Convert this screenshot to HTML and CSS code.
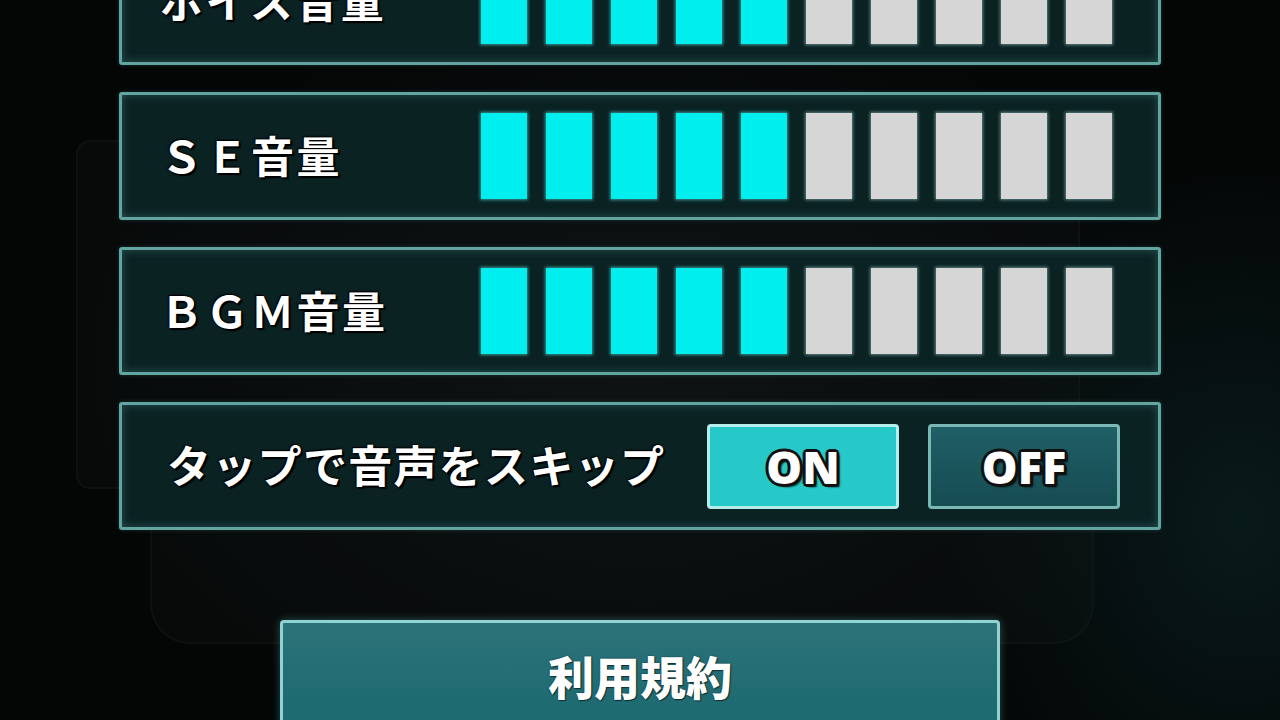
FILE: index.html
```html
<!DOCTYPE html>
<html lang="ja">
<head>
<meta charset="utf-8">
<title>設定</title>
<link rel="stylesheet" href="styles.css">
</head>
<body>
<div class="screen">
  <div class="bg-art bg-art-left"></div>
  <div class="bg-art bg-art-right"></div>
  <main class="settings">
    <section class="panel volume">
      <div class="label">ボイス音量</div>
      <div class="bars">
        <span class="bar on"></span><span class="bar on"></span><span class="bar on"></span><span class="bar on"></span><span class="bar on"></span>
        <span class="bar"></span><span class="bar"></span><span class="bar"></span><span class="bar"></span><span class="bar"></span>
      </div>
    </section>
    <section class="panel volume">
      <div class="label">ＳＥ音量</div>
      <div class="bars">
        <span class="bar on"></span><span class="bar on"></span><span class="bar on"></span><span class="bar on"></span><span class="bar on"></span>
        <span class="bar"></span><span class="bar"></span><span class="bar"></span><span class="bar"></span><span class="bar"></span>
      </div>
    </section>
    <section class="panel volume">
      <div class="label">ＢＧＭ音量</div>
      <div class="bars">
        <span class="bar on"></span><span class="bar on"></span><span class="bar on"></span><span class="bar on"></span><span class="bar on"></span>
        <span class="bar"></span><span class="bar"></span><span class="bar"></span><span class="bar"></span><span class="bar"></span>
      </div>
    </section>
    <section class="panel toggle">
      <div class="label label-wide">タップで音声をスキップ</div>
      <div class="switches">
        <button class="switch active">ON</button>
        <button class="switch">OFF</button>
      </div>
    </section>
    <div class="footer">
      <button class="terms">利用規約</button>
    </div>
  </main>
</div>
</body>
</html>
```

FILE: styles.css
```css
html, body {
  margin: 0;
  padding: 0;
}
body {
  width: 1280px;
  height: 720px;
  overflow: hidden;
  background: #050707;
  font-family: "Noto Sans CJK JP", "Noto Sans", sans-serif;
}
.screen {
  position: relative;
  width: 1280px;
  height: 720px;
  overflow: hidden;
  background:
    radial-gradient(ellipse 420px 520px at 1240px 520px, rgba(20, 70, 70, 0.3), rgba(0,0,0,0) 70%),
    radial-gradient(ellipse 700px 500px at 640px 360px, #0d1212, #040606 80%);
}
.bg-art {
  position: absolute;
  border: 2px solid rgba(40, 50, 50, 0.18);
  background: rgba(20, 24, 24, 0.25);
  border-radius: 14px;
}
.bg-art-left {
  left: 76px;
  top: 140px;
  width: 1000px;
  height: 345px;
}
.bg-art-right {
  left: 150px;
  top: 430px;
  width: 940px;
  height: 210px;
  border-radius: 40px;
}
.settings {
  position: relative;
  display: flex;
  flex-direction: column;
  gap: 27px;
  width: 1042px;
  margin: -63px 0 0 119px;
}
.panel {
  box-sizing: border-box;
  height: 128px;
  display: flex;
  align-items: center;
  background: #0b2223;
  border: 3px solid #62a4a0;
  border-radius: 3px;
  box-shadow: inset 0 0 10px rgba(90, 170, 165, 0.35), 0 0 4px rgba(90, 170, 165, 0.25);
}
.label {
  box-sizing: border-box;
  width: 359px;
  padding-left: 38px;
  padding-bottom: 4px;
  color: #fff;
  font-size: 43px;
  font-weight: 700;
  line-height: 1;
  letter-spacing: 2.5px;
  text-shadow: 0 0 3px #000, 2px 2px 1px #000, -1px -1px 1px #000;
}
.label-wide {
  width: auto;
  flex: 1;
  padding-left: 45px;
  letter-spacing: 1.3px;
  font-size: 44px;
}
.bars {
  display: flex;
  gap: 19px;
}
.bar {
  display: block;
  width: 46px;
  height: 86px;
  background: #d6d6d6;
  box-shadow: 0 0 3px 1px rgba(170, 220, 215, 0.55);
}
.bar.on {
  background: #00eeee;
  box-shadow: 0 0 3px 1px rgba(90, 230, 225, 0.6);
}
.switches {
  display: flex;
  gap: 29px;
  padding-right: 38px;
}
.switch {
  box-sizing: border-box;
  width: 192px;
  height: 85px;
  border: 3px solid #7ab8b6;
  border-radius: 4px;
  background: linear-gradient(180deg, #1f5f66, #164c52);
  color: #fff;
  font-family: "Open Sans", "Noto Sans", sans-serif;
  font-size: 45px;
  font-weight: 800;
  line-height: 1;
  padding: 0;
  text-shadow:
    3px 0 0 #101010, -3px 0 0 #101010, 0 3px 0 #101010, 0 -3px 0 #101010,
    2px 2px 0 #101010, -2px -2px 0 #101010, 2px -2px 0 #101010, -2px 2px 0 #101010,
    3px 3px 2px #000;
}
.switch.active {
  background: #27c9c8;
  border-color: #b5ecec;
}
.footer {
  display: flex;
  justify-content: center;
  padding-top: 63px;
}
.terms {
  box-sizing: border-box;
  width: 720px;
  height: 140px;
  border: 3px solid #8fd3d4;
  border-bottom: none;
  border-radius: 4px 4px 0 0;
  background: linear-gradient(180deg, #2c7279 0%, #1f6b72 60%, #1a6a70 100%);
  color: #fff;
  font-family: "Noto Sans CJK JP", sans-serif;
  font-size: 46px;
  font-weight: 900;
  line-height: 1;
  padding: 0 0 34px 0;
  box-shadow: 0 0 8px rgba(120, 210, 210, 0.35);
  text-shadow: 0 0 2px rgba(0,0,0,0.5), 1px 1px 1px rgba(0,0,0,0.5);
}
```
